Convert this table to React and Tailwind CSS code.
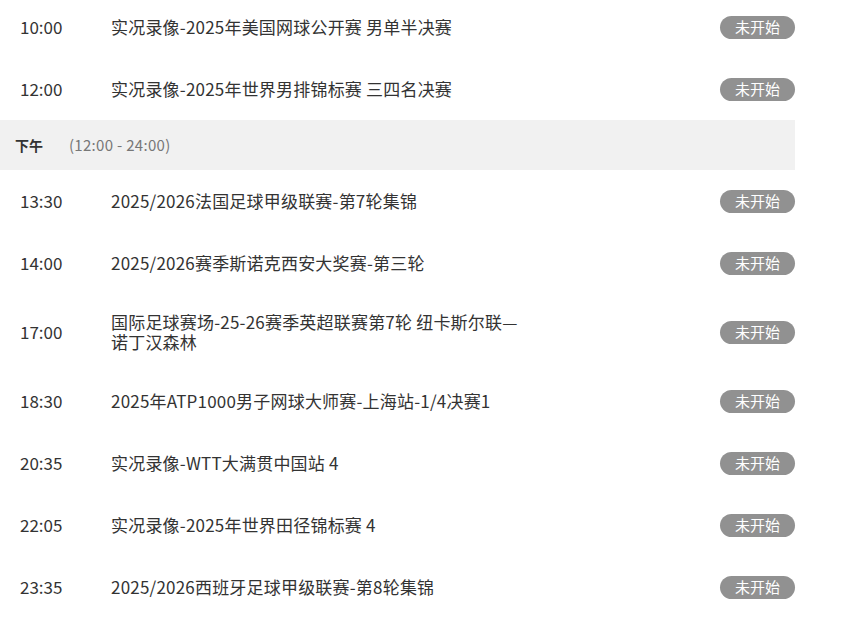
import React from "react";

const morning = [
  { time: "10:00", title: "实况录像-2025年美国网球公开赛 男单半决赛" },
  { time: "12:00", title: "实况录像-2025年世界男排锦标赛 三四名决赛" },
];

const afternoon = [
  { time: "13:30", title: "2025/2026法国足球甲级联赛-第7轮集锦" },
  { time: "14:00", title: "2025/2026赛季斯诺克西安大奖赛-第三轮" },
  { time: "17:00", title: "国际足球赛场-25-26赛季英超联赛第7轮 纽卡斯尔联—诺丁汉森林" },
  { time: "18:30", title: "2025年ATP1000男子网球大师赛-上海站-1/4决赛1" },
  { time: "20:35", title: "实况录像-WTT大满贯中国站 4" },
  { time: "22:05", title: "实况录像-2025年世界田径锦标赛 4" },
  { time: "23:35", title: "2025/2026西班牙足球甲级联赛-第8轮集锦" },
];

const Row = ({ time, title }) => (
  <div className="flex min-h-[62px] items-center py-[18px] text-[17px] leading-5 text-[#333]">
    <div className="w-[111px] shrink-0 pl-5">{time}</div>
    <div className="flex-1 pr-[196px] tracking-[0.2px]">{title}</div>
    <span className="flex h-[23px] w-[75px] shrink-0 items-center justify-center rounded-full bg-[#919191] text-[15px] text-white">
      未开始
    </span>
  </div>
);

const App = () => {
  return (
    <div
      className="h-[624px] w-[860px] overflow-hidden bg-white"
      style={{ fontFamily: '"Noto Sans CJK SC", "Noto Sans", sans-serif' }}
    >
      <div className="-mt-[4px] w-[795px]">
        {morning.map((r) => (
          <Row key={r.time} {...r} />
        ))}
        <div className="flex h-[50px] items-center bg-[#f1f1f1] pl-[15px] text-sm">
          <span className="font-bold text-[#333]">下午</span>
          <span className="ml-[26px] text-[15px] tracking-[0.3px] text-[#777]">(12:00 - 24:00)</span>
        </div>
        {afternoon.map((r) => (
          <Row key={r.time} {...r} />
        ))}
      </div>
    </div>
  );
};

export default App;
